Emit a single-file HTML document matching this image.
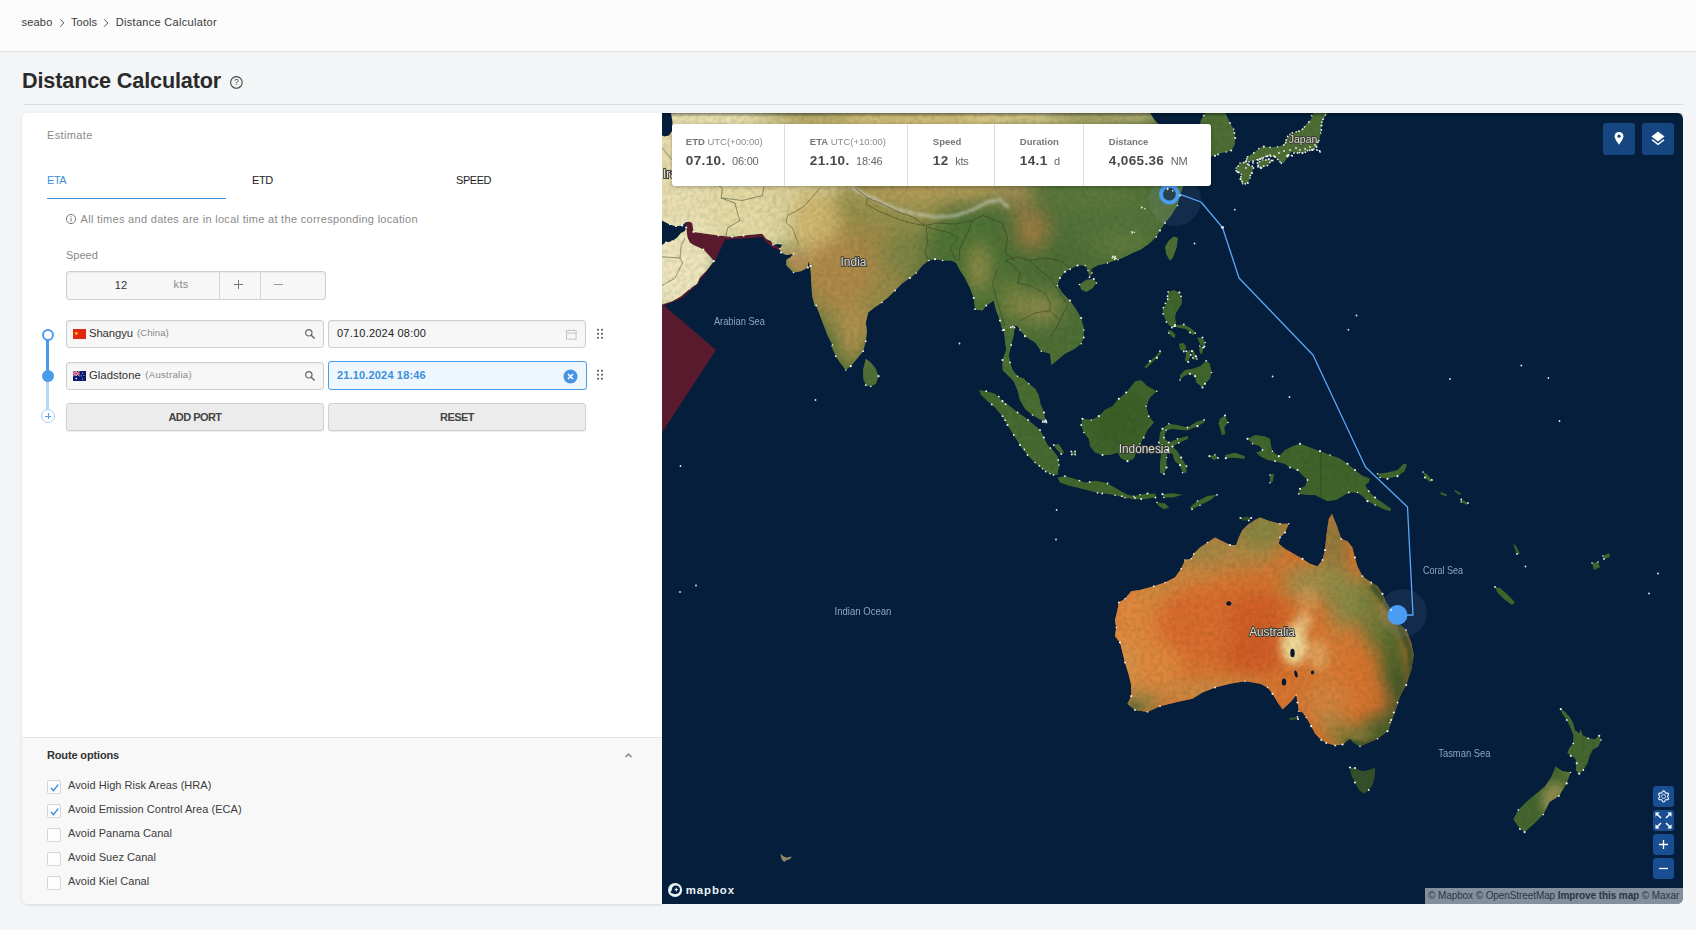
<!DOCTYPE html>
<html lang="en">
<head>
<meta charset="utf-8">
<title>Distance Calculator</title>
<style>
*{box-sizing:border-box;margin:0;padding:0}
html,body{width:1696px;height:930px;overflow:hidden}
body{background:#f3f5f7;font-family:"Liberation Sans",sans-serif;color:#333;position:relative;font-size:11px}
.abs{position:absolute}
#topbar{left:0;top:0;width:1696px;height:52px;background:#fcfcfc;border-bottom:1px solid #e1e3e5}
#crumbs{left:22px;top:15px;font-size:11px;color:#3a3a3a;white-space:nowrap;line-height:14px}
#crumbs span.s{display:inline-block;width:18px;text-align:center;color:#555}
#title{left:22px;top:66.2px;font-size:21.6px;font-weight:bold;color:#2a2a2a;letter-spacing:-.13px;white-space:nowrap;line-height:30px}
#hr{left:24px;top:104px;width:1659px;height:1px;background:#d9dbde}
#card{left:22px;top:113px;width:640px;height:791px;background:#fff;border-radius:6px 0 0 6px;box-shadow:0 1px 3px rgba(0,0,0,.12)}
.lbl{color:#8a8a8a;font-size:11px;white-space:nowrap;line-height:14px}
.tab{font-size:11px;color:#222;white-space:nowrap;line-height:14px;letter-spacing:-.45px}
.inp{height:28.4px;border:1px solid #cfcfcf;border-radius:3px;background:#f7f7f7;box-shadow:inset 0 1px 2px rgba(0,0,0,.06)}
.btn{height:28.4px;border:1px solid #d0d0d0;border-radius:3px;background:#ececec;text-align:center;font-size:11px;letter-spacing:-.55px;font-weight:bold;color:#444;line-height:27px;box-shadow:0 1px 1px rgba(0,0,0,.08)}
.t{white-space:nowrap;line-height:14px}
#ropt{left:22px;top:737px;width:640px;height:167px;background:#f8f8f8;border-top:1px solid #e2e2e2;border-radius:0 0 0 6px}
.cb{width:14px;height:14px;border:1px solid #d6d6d6;border-radius:2px;background:#fdfdfd;left:47px}
.cbl{left:68.1px;letter-spacing:.04px;font-size:11px;color:#3c3c3c;white-space:nowrap;line-height:14px}
#map{left:662px;top:113px;width:1021px;height:791px;background:#041e3c;border-radius:0 6px 6px 0;overflow:hidden}
#info{left:672px;top:124px;width:539px;height:62px;background:#fff;border-radius:3px;box-shadow:0 1px 4px rgba(0,0,0,.3)}
#info .d{position:absolute;top:0;width:1px;height:62px;background:#dedede}
#info .h{position:absolute;top:12px;font-size:9.5px;color:#8c8c8c;white-space:nowrap;line-height:12px}
#info .h b{color:#777}
#info .v{position:absolute;top:28px;font-size:11px;color:#555;white-space:nowrap;line-height:18px}
#info .v i{font-style:normal;margin-left:6.6px;letter-spacing:-.25px;color:#666}
#info .v b{font-size:13.5px;color:#484848;letter-spacing:.36px}
.mb{background:#15467f;border-radius:3px}
.mb2{background:#1a4e92}
</style>
</head>
<body>
<div id="topbar" class="abs"></div>
<div class="abs t" style="left:21.6px;top:15px;font-size:11px;color:#3a3a3a;letter-spacing:.18px">seabo</div>
<svg class="abs" style="left:59px;top:17.5px" width="6" height="10" viewBox="0 0 6 10"><path d="M1.2 1.3 L4.8 5 L1.2 8.7" fill="none" stroke="#555" stroke-width="1"/></svg>
<div class="abs t" style="left:71px;top:15px;font-size:11px;color:#3a3a3a;letter-spacing:.06px">Tools</div>
<svg class="abs" style="left:103px;top:17.5px" width="6" height="10" viewBox="0 0 6 10"><path d="M1.2 1.3 L4.8 5 L1.2 8.7" fill="none" stroke="#555" stroke-width="1"/></svg>
<div class="abs t" style="left:115.8px;top:15px;font-size:11px;color:#3a3a3a;letter-spacing:.3px">Distance Calculator</div>
<div id="title" class="abs">Distance Calculator</div>
<svg class="abs" style="left:229px;top:75px" width="14" height="14" viewBox="0 0 14 14"><circle cx="7.4" cy="7.4" r="5.8" fill="none" stroke="#444" stroke-width="1.1"/><text x="7.4" y="10.4" font-size="8.4" text-anchor="middle" fill="#444" font-family="Liberation Sans, sans-serif">?</text></svg>
<div id="hr" class="abs"></div>

<div id="card" class="abs"></div>
<div class="abs lbl" style="left:47px;top:128px;letter-spacing:.36px">Estimate</div>
<div class="abs tab" style="left:47px;top:173px;color:#3d8fdc">ETA</div>
<div class="abs" style="left:47px;top:198px;width:179px;height:1px;background:#3d8fdc"></div>
<div class="abs tab" style="left:252px;top:173px">ETD</div>
<div class="abs tab" style="left:456px;top:173px">SPEED</div>
<svg class="abs" style="left:65px;top:213px" width="12" height="12" viewBox="0 0 12 12"><circle cx="6" cy="6" r="4.6" fill="none" stroke="#777" stroke-width="1"/><rect x="5.5" y="5.2" width="1" height="3.4" fill="#777"/><rect x="5.5" y="3.2" width="1" height="1.1" fill="#777"/></svg>
<div class="abs lbl" style="left:80.5px;top:212px;font-size:11px;letter-spacing:.3px">All times and dates are in local time at the corresponding location</div>
<div class="abs lbl" style="left:66px;top:248px">Speed</div>
<div class="abs inp" style="left:66px;top:271px;width:259.5px;height:28.8px"></div>
<div class="abs" style="left:219px;top:272px;width:1px;height:27px;background:#d4d4d4"></div>
<div class="abs" style="left:259.5px;top:272px;width:1px;height:27px;background:#d4d4d4"></div>
<div class="abs t" style="left:114.8px;top:278.3px;color:#333">12</div>
<div class="abs t" style="left:173.5px;top:277.3px;color:#888;letter-spacing:.4px">kts</div>
<div class="abs" style="left:234px;top:284px;width:9px;height:1px;background:#777"></div>
<div class="abs" style="left:238px;top:280px;width:1px;height:9px;background:#777"></div>
<div class="abs" style="left:274px;top:284px;width:9px;height:1px;background:#999"></div>

<!-- timeline -->
<div class="abs" style="left:46px;top:335px;width:3px;height:41px;background:#4a9bea"></div>
<div class="abs" style="left:46px;top:376px;width:3px;height:34px;background:#b9d8f7"></div>
<div class="abs" style="left:42px;top:329px;width:12px;height:12px;border-radius:50%;border:2px solid #4a9bea;background:#fff"></div>
<div class="abs" style="left:42px;top:370px;width:12px;height:12px;border-radius:50%;background:#4a9bea"></div>
<div class="abs" style="left:41px;top:409px;width:14px;height:14px;border-radius:50%;border:1px solid #a9cff5;background:#fff"></div>
<div class="abs" style="left:45px;top:415.5px;width:6px;height:1px;background:#4a9bea"></div>
<div class="abs" style="left:47.5px;top:413px;width:1px;height:6px;background:#4a9bea"></div>

<!-- row 1 -->
<div class="abs inp" style="left:66px;top:320px;width:258px"></div>
<svg class="abs" style="left:73px;top:329px" width="13" height="10" viewBox="0 0 13 10"><rect width="13" height="10" fill="#de2910"/><text x="1" y="5.5" font-size="5" fill="#ffde00" font-family="DejaVu Sans, sans-serif">&#9733;</text></svg>
<div class="abs t" style="left:89px;top:326px;font-size:11.3px;color:#333;letter-spacing:-.1px">Shangyu</div><div class="abs t" style="left:137px;top:325.5px;font-size:9.6px;color:#888;letter-spacing:.05px">(China)</div>
<svg class="abs" style="left:304px;top:328px" width="12" height="12" viewBox="0 0 12 12"><circle cx="4.8" cy="4.8" r="3.2" fill="none" stroke="#666" stroke-width="1.2"/><path d="M7.2 7.2 L10.6 10.6" stroke="#666" stroke-width="1.4"/></svg>
<div class="abs inp" style="left:328px;top:320px;width:258px"></div>
<div class="abs t" style="left:337px;top:326px;font-size:11px;color:#222;letter-spacing:.22px">07.10.2024 08:00</div>
<svg class="abs" style="left:566px;top:329px" width="11" height="11" viewBox="0 0 11 11"><rect x="0.5" y="1.5" width="9.6" height="8.6" fill="none" stroke="#c4c4c4" stroke-width="1"/><path d="M0.5 4 H10" stroke="#c4c4c4"/><path d="M3 0.3 V2 M7.6 0.3 V2" stroke="#c4c4c4"/></svg>
<!-- row 2 -->
<div class="abs inp" style="left:66px;top:361.6px;width:258px"></div>
<svg class="abs" style="left:73px;top:371px" width="13" height="10" viewBox="0 0 13 10"><rect width="13" height="10" fill="#0a1a6e"/><rect width="6.5" height="5" fill="#1c2a80"/><path d="M0 0 L6.5 5 M6.5 0 L0 5" stroke="#fff" stroke-width="1"/><path d="M3.25 0 V5 M0 2.5 H6.5" stroke="#fff" stroke-width="1.4"/><path d="M3.25 0 V5 M0 2.5 H6.5 M0 0 L6.5 5 M6.5 0 L0 5" stroke="#d8203a" stroke-width=".6"/><circle cx="3.2" cy="7.6" r=".8" fill="#fff"/><circle cx="9.6" cy="2" r=".5" fill="#fff"/><circle cx="11" cy="4.2" r=".5" fill="#fff"/><circle cx="9.6" cy="8" r=".5" fill="#fff"/><circle cx="8.2" cy="4.8" r=".5" fill="#fff"/></svg>
<div class="abs t" style="left:89px;top:368px;font-size:11.3px;color:#333;letter-spacing:.03px">Gladstone</div><div class="abs t" style="left:145.3px;top:367.5px;font-size:9.6px;color:#888;letter-spacing:.26px">(Australia)</div>
<svg class="abs" style="left:304px;top:370px" width="12" height="12" viewBox="0 0 12 12"><circle cx="4.8" cy="4.8" r="3.2" fill="none" stroke="#666" stroke-width="1.2"/><path d="M7.2 7.2 L10.6 10.6" stroke="#666" stroke-width="1.4"/></svg>
<div class="abs" style="left:328px;top:361px;width:259px;height:29px;border:1px solid #4a9bea;border-radius:3px;background:#eef6fe"></div>
<div class="abs t" style="left:337px;top:368px;font-size:11px;color:#3d8fdc;font-weight:bold;letter-spacing:.16px">21.10.2024 18:46</div>
<svg class="abs" style="left:563.4px;top:368.5px" width="15" height="15" viewBox="0 0 15 15"><circle cx="7.5" cy="7.5" r="7" fill="#4a93e4"/><path d="M5 5 L10 10 M10 5 L5 10" stroke="#fff" stroke-width="1.5"/></svg>
<!-- drag handles -->
<svg class="abs" style="left:596px;top:328px" width="8" height="12" viewBox="0 0 8 12"><g fill="#555"><circle cx="2" cy="1.8" r="1"/><circle cx="6" cy="1.8" r="1"/><circle cx="2" cy="5.8" r="1"/><circle cx="6" cy="5.8" r="1"/><circle cx="2" cy="9.8" r="1"/><circle cx="6" cy="9.8" r="1"/></g></svg>
<svg class="abs" style="left:596px;top:369px" width="8" height="12" viewBox="0 0 8 12"><g fill="#555"><circle cx="2" cy="1.8" r="1"/><circle cx="6" cy="1.8" r="1"/><circle cx="2" cy="5.8" r="1"/><circle cx="6" cy="5.8" r="1"/><circle cx="2" cy="9.8" r="1"/><circle cx="6" cy="9.8" r="1"/></g></svg>
<!-- buttons -->
<div class="abs btn" style="left:66px;top:403px;width:258px">ADD PORT</div>
<div class="abs btn" style="left:328px;top:403px;width:258px">RESET</div>

<!-- route options -->
<div id="ropt" class="abs"></div>
<div class="abs t" style="left:47px;top:748px;font-weight:bold;font-size:11px;color:#333;letter-spacing:-.15px">Route options</div>
<svg class="abs" style="left:624px;top:752px" width="9" height="7" viewBox="0 0 9 7"><path d="M1.5 5 L4.5 2 L7.5 5" fill="none" stroke="#777" stroke-width="1.2"/></svg>
<div class="abs cb" style="top:780px"></div>
<svg class="abs" style="left:49px;top:782px" width="11" height="11" viewBox="0 0 11 11"><path d="M2 6 L4.4 8.6 L9.2 2.6" fill="none" stroke="#3d8fdc" stroke-width="1.5"/></svg>
<div class="abs cbl" style="top:778px">Avoid High Risk Areas (HRA)</div>
<div class="abs cb" style="top:804px"></div>
<svg class="abs" style="left:49px;top:806px" width="11" height="11" viewBox="0 0 11 11"><path d="M2 6 L4.4 8.6 L9.2 2.6" fill="none" stroke="#3d8fdc" stroke-width="1.5"/></svg>
<div class="abs cbl" style="top:802px">Avoid Emission Control Area (ECA)</div>
<div class="abs cb" style="top:828px"></div>
<div class="abs cbl" style="top:826px">Avoid Panama Canal</div>
<div class="abs cb" style="top:852px"></div>
<div class="abs cbl" style="top:850px">Avoid Suez Canal</div>
<div class="abs cb" style="top:876px"></div>
<div class="abs cbl" style="top:874px">Avoid Kiel Canal</div>

<!-- MAP -->
<div id="map" class="abs">
<svg id="mapsvg" width="1021" height="791" viewBox="662 113 1021 791" style="position:absolute;left:0;top:0">
<!--LAND-->
<defs>
<filter id="b10" x="-30%" y="-30%" width="160%" height="160%"><feGaussianBlur stdDeviation="9"/></filter>
<filter id="b5" x="-30%" y="-30%" width="160%" height="160%"><feGaussianBlur stdDeviation="4.5"/></filter>
<filter id="b2" x="-30%" y="-30%" width="160%" height="160%"><feGaussianBlur stdDeviation="1.6"/></filter>
<filter id="tx" x="0" y="0" width="100%" height="100%"><feTurbulence type="fractalNoise" baseFrequency="0.22" numOctaves="3" seed="4" result="n"/><feColorMatrix in="n" type="matrix" values="0 0 0 0 0  0 0 0 0 0  0 0 0 0 0  1.6 0 0 0 -0.55" result="a"/><feFlood flood-color="#1b2a10"/><feComposite in2="a" operator="in"/></filter>
<clipPath id="c_asia"><path d="M650 100 L650 220.6 L662 220.6 L669.8 224.4 L676 226.2 L682.2 225.6 L686.6 221.2 L692.2 222.5 L693.5 231.9 L706 233.8 L718.5 235.6 L732.2 236.9 L743.5 235.6 L762.2 233.8 L766 238.8 L771 241.2 L772.9 245 L779.8 243.8 L782.2 245 L779.8 248.8 L781 252.5 L786 255 L793.5 253.8 L790.4 257.5 L786.6 259.4 L786 265 L793.5 272.5 L801 271.2 L807.9 267.5 L807.9 261.2 L810.4 266.2 L811 277.5 L811.6 287.5 L812.2 296.2 L814.8 306 L816.2 305.5 L820 315.5 L823.8 325.5 L827.5 335.5 L832.5 345 L830.8 345 L835.8 356.2 L840.8 363.8 L845.8 370 L850.8 366.2 L857 358.8 L863.2 351.2 L865.8 341.2 L867 331.2 L865.8 322.5 L868.2 312.5 L874.5 307.5 L882 302.5 L884.5 300 L887.5 298 L895 290.5 L902.5 283 L910 278 L916.2 273 L922.5 265.5 L928.8 260.5 L935 259.2 L942.5 260.5 L951.2 260.5 L956.2 263 L960 270.5 L965 278 L970 288 L973.8 298 L975 308 L975 309.2 L982.5 310.5 L986.2 305.5 L993.8 300.5 L996.2 310.5 L1000 320.5 L1002.5 330.5 L1003.8 330 L1003.8 330 L1005 340 L1006.2 350 L1002.5 360 L1002.5 370 L1007.5 375 L1013.8 381.2 L1017.5 390 L1020 400 L1025 408.8 L1032.5 415 L1040 419.5 L1045.5 420.5 L1044 412.5 L1040 402.5 L1038.8 395 L1035 388.8 L1028.8 383.8 L1023.8 378.8 L1017.5 376.2 L1012.5 370 L1010 362.5 L1008.8 355 L1011.2 345 L1013.8 335 L1014.5 327.5 L1012.5 325 L1017.5 326.2 L1020 330 L1025 336.2 L1035 342.5 L1041.2 351.2 L1050 353.8 L1051.2 365 L1056.2 361.2 L1065 353.8 L1075 348.8 L1081.2 343.8 L1083.8 337.5 L1083.8 330 L1083.8 328 L1081.2 318 L1076.2 309.2 L1070 300.5 L1062.5 293 L1057.5 285.5 L1060 278 L1065 271.8 L1070 269.2 L1077.5 265.5 L1085 265.5 L1088 270.5 L1089.5 277.2 L1092 273 L1091.2 269.2 L1097.5 265.5 L1107.5 263 L1115 260.5 L1122.5 258 L1132.5 253 L1141.2 249.2 L1150 243 L1156.2 236.8 L1160 230.5 L1165 223 L1171.2 215.5 L1177.5 205.5 L1180 195.5 L1183 186.8 L1172.5 170.5 L1165 158 L1162.5 143 L1160 125.5 L1155 120.5 L1150 113 L1150 103Z M653.5 245 L662 245 L666 242.6 L672.2 241.2 L677.2 237.5 L681 233.1 L685 231 L686.2 227.5 L687.5 237.5 L689.8 242.5 L693.5 245 L703.5 249.4 L711 257.5 L713.8 261.2 L706 271.2 L699.8 277.5 L697.2 283.8 L689.8 288.8 L681 296.2 L672.2 301.2 L662 304.4 L653.5 305Z M865.8 358.8 L870.8 362.5 L876 368.8 L878.5 376.2 L876 383.8 L870.8 386.5 L865.8 385.2 L863.2 378.8 L863 370 L864.5 363.8Z M1079.5 284.5 L1086.2 279.8 L1093.8 279 L1096.5 283 L1092.5 288.2 L1086.2 292 L1081.2 289.5Z M1168.8 240.5 L1173.8 236.5 L1178 238 L1176.5 248 L1172.8 258 L1170 260.8 L1166.2 254.2 L1165 246.8Z M1203.8 115.5 L1206.2 111.8 L1225 111.8 L1230 123 L1233.8 129.2 L1235.2 138 L1234.5 145.5 L1231.2 150.5 L1226.2 152 L1220 153.2 L1215 155.8 L1210 156.1 L1205 150.5 L1203.1 138 L1200 128 L1200.6 120.5Z M1236.2 168 L1240 163 L1246.2 161.5 L1250 165.5 L1253.4 168 L1252 173 L1250 178 L1247.8 183 L1242.5 183.8 L1240.5 179.2 L1241.2 174.2 L1237.5 171.8Z M1246.2 161.1 L1247.5 156.8 L1253.8 153 L1258.8 148.6 L1263.8 146.6 L1270 147.4 L1277.5 146.8 L1283.8 144.9 L1286.2 139.9 L1290 134.2 L1296.2 131.8 L1302.5 129.2 L1306.2 124.2 L1311.2 119.2 L1313.8 111.8 L1328.8 111.8 L1323.1 119.2 L1321.5 125.5 L1320.8 133 L1319 140.5 L1316.5 146.8 L1312.5 150 L1307.5 150.6 L1302.5 153.1 L1297.5 153.1 L1291.2 151.9 L1287.5 156.8 L1283.8 163.1 L1280 161.9 L1275 156.9 L1267.5 156.2 L1260 159.2 L1253.1 161.2Z M1257.5 163 L1262.5 159.9 L1268.8 159.1 L1272.8 160.5 L1267.5 165.6 L1261.2 168.1 L1258 166.8Z"/></clipPath>
<clipPath id="c_sea"><path d="M1247.5 438.8 L1255 435 L1265 436.2 L1270 438.8 L1271.2 446.2 L1272.5 451.2 L1278.8 456.2 L1285 450 L1292.5 446.2 L1300 443.8 L1310 447.5 L1320 451.2 L1330 455 L1340 458.8 L1347.5 463.8 L1355 470 L1361.2 475 L1370 478.8 L1368.8 482.5 L1365 485 L1368.8 491.2 L1375 497.5 L1382.5 502.5 L1391.2 508.8 L1390 511.2 L1382.5 508.8 L1375 505 L1367.5 501.2 L1362.5 496.2 L1357.5 492.5 L1348.8 492.5 L1342.5 496.2 L1336.2 500 L1327.5 501.2 L1320 497.5 L1315 495 L1307.5 495 L1298.8 493.8 L1300 488.8 L1305 486.2 L1307.5 480 L1302.5 475 L1297.5 470 L1290 467.5 L1285 463.8 L1280 462.5 L1275 461.2 L1267.5 460 L1260 456.2 L1256.2 452.5 L1262.5 450 L1260 446.2 L1252.5 443.8Z M1377.5 473.8 L1387.5 472.5 L1397.5 470 L1403.8 463.8 L1407 464.5 L1404.5 471.2 L1397.5 476.2 L1387.5 478.8 L1380 477.5Z M1423 472 L1427.5 474.5 L1431.8 480 L1430 482.5 L1425 477.5Z M1440.5 492 L1447 494.5 L1446.2 496.5 L1440.5 494Z M1461.2 499.5 L1468 503 L1467 505 L1461.2 502Z M1455 490 L1461.2 493.8 L1460 495 L1454.5 491.5Z M1220 418.8 L1225 415.5 L1228 422.5 L1224.2 427.5 L1225.5 433.8 L1221.8 435.5 L1220 428 L1218.5 423.8Z M1225 455 L1235 452.8 L1244.5 456 L1244.5 459 L1235 457.8 L1225.8 458.2Z M1209.5 456.2 L1215 454.8 L1218 458 L1213.8 460.2Z M1270 475 L1274 473.5 L1273 481.2 L1270 482.8Z M1189.5 507.5 L1197.5 501 L1207.5 496 L1217 494.8 L1210.5 500 L1200 505.2 L1192 509.2Z M1157 502.5 L1165 503.5 L1169.2 507.5 L1163.8 509.2 L1158.2 505.5Z M1100 482 L1107.5 483.5 L1115 490.8 L1125 494.5 L1135 496 L1145 494.5 L1155.5 493.5 L1155.5 497.5 L1145 499 L1135 499.2 L1125 497.8 L1115 495.2 L1105 492.8 L1100 490Z M1162.5 494.2 L1172.5 493.2 L1183 494.8 L1172.5 497.5 L1163.8 497.5Z M1180 375 L1185 370 L1192.5 368.8 L1200 366.2 L1206.2 360.8 L1210 363.8 L1211.5 372.5 L1210 378.8 L1205 383.8 L1202.5 387.5 L1196.2 382.5 L1195 376.2 L1190 373.8 L1183.8 376.2 L1180 380Z M978.8 390 L986.2 391.2 L995 393.8 L1002.5 401.2 L1010 406.2 L1017.5 412.5 L1025 417.5 L1032.5 423.8 L1040 430 L1043.8 437.5 L1047.5 445 L1052.5 450 L1057.5 456.2 L1059 465 L1057.5 475 L1050 473.8 L1042.5 468.8 L1035 462.5 L1027.5 455 L1020 445 L1013.8 435 L1007.5 425 L1002.5 416.2 L995 407.5 L987.5 401.2 L981.2 395Z M1135 381.2 L1141.2 380 L1147.5 386.2 L1156.8 391.2 L1150 397.5 L1146.2 406.2 L1148.8 416.2 L1154 422.5 L1147.5 430 L1143.8 437.5 L1140 443.8 L1136.2 452.5 L1133.8 458.8 L1127.5 461.2 L1121.2 458.8 L1117.5 452.5 L1110 455 L1102.5 455 L1095 452.5 L1090 446.2 L1088.8 438.8 L1083.8 432.5 L1081.2 425 L1082.5 418.8 L1091.2 420 L1098.8 416.2 L1105 410 L1112.5 406.2 L1118.8 398.8 L1126.2 392.5 L1131.2 386.2Z M1057.5 477.5 L1065 476.2 L1075 478.8 L1085 482.5 L1095 480.8 L1105 482.5 L1112.5 486.2 L1121.2 491.2 L1128 495 L1125 497.5 L1117.5 495.5 L1107.5 494 L1097.5 492.8 L1087.5 490.2 L1077.5 487.8 L1067.5 485.2 L1060 482.5Z M1133.8 496.2 L1140 494.8 L1147.5 493.5 L1155.5 494.2 L1150 498 L1141.2 499 L1135 498Z M1053.8 445 L1058.8 444.2 L1064 452.5 L1061.2 454 L1056.2 448.8Z M1071.2 451.5 L1075.2 451.5 L1075.2 454.5 L1071.8 454.5Z M1144.4 366.9 L1150 361.2 L1155.6 356.2 L1160 351.2 L1161.5 352.5 L1156.9 357.8 L1151.2 363.4 L1145.8 368.4Z M1162.5 428.8 L1168.8 423.8 L1177.5 425 L1187.5 427.5 L1197.5 421.2 L1204.2 419.8 L1204.2 422.5 L1197.5 426.2 L1187.5 430.5 L1172.5 429 L1166.2 430.2 L1164 437.5 L1168.8 442.5 L1177.5 438.8 L1188 436 L1188 439 L1178.8 442.8 L1172.5 446.5 L1177.5 451.2 L1181.2 457.5 L1186.5 466.2 L1186.5 472.8 L1182.5 472.8 L1180 465.2 L1175 461.5 L1172.5 454 L1167.5 450.2 L1166.5 457.5 L1166.5 467.5 L1164 474 L1160 472.8 L1160 462.5 L1161.2 452.5 L1158.8 442.5 L1160 432.5Z M1168.1 291.9 L1173.8 290 L1179.4 292.5 L1181.9 298.8 L1181.9 303.8 L1178.8 308.8 L1176.2 312.5 L1175 317.5 L1176.2 322.5 L1175 326.2 L1171.9 327.5 L1168.8 325 L1165.6 320 L1163.1 313.8 L1162.5 308.8 L1165 306.2 L1166.9 301.2 L1167.5 296.2Z M1175 325 L1178.1 325 L1183.8 324.4 L1188.8 326.9 L1193.1 330 L1195.2 333.1 L1193.1 335.2 L1190 332.5 L1186.2 329 L1181.2 328.2 L1176.2 327.2Z M1168.1 330 L1172.5 331.2 L1175.6 335 L1174.4 338.1 L1171.2 336.2 L1168.8 333.1Z M1196.9 337.5 L1202.5 337.5 L1205.2 342.5 L1204.5 346.5 L1200.6 345 L1198.8 341.2Z M1199.8 346 L1203.2 347.5 L1202.6 353.8 L1200 353.4 L1199.2 349.4Z M1178.8 343.8 L1183.8 343 L1186.5 347.5 L1183.8 351.5 L1180 349.5Z M1186.2 351.2 L1190 350 L1190.8 355 L1188.2 362 L1185 360.8 L1185.6 356.2Z M1191.9 351.2 L1193.8 350 L1195.8 356.2 L1193.2 360.2 L1192.5 355.8Z M1192.8 357.8 L1196.2 356.5 L1197 359 L1193.8 359.8Z M1495 587 L1500 588 L1508 595 L1515 602 L1512 605 L1504 599 L1497 592Z M1592 563 L1598 562 L1600 567 L1594 570Z M1603 556 L1609 553 L1610 557 L1604 559Z M1513 544 L1516 546 L1520 554 L1517 554Z"/></clipPath>
<clipPath id="c_aus"><path d="M1332 513.8 L1337.5 527.5 L1341.2 538.8 L1347.5 541.2 L1352.5 547.5 L1355 557.5 L1357.5 566.2 L1362.5 576.2 L1371.2 582.5 L1377.5 586.2 L1382.5 593.8 L1386.2 602.5 L1391.2 610 L1400 625 L1406.2 630 L1411.2 642.5 L1413.8 655 L1411.2 670 L1406.2 685 L1401.2 693.8 L1397.5 702.5 L1393.8 712.5 L1390 722.5 L1387.5 732 L1398.8 701.2 L1395 707.5 L1391.2 720 L1387.5 731.2 L1377.5 738.8 L1368.8 742.5 L1360 746.2 L1353.8 742.5 L1350 738.8 L1342.5 744.5 L1335 745.5 L1326.2 743 L1321.2 740 L1315 733.8 L1311.2 726.2 L1306.2 717.5 L1302.5 712.5 L1298.8 711.2 L1297.5 702.5 L1296.2 695 L1292.5 700 L1287.5 705 L1282.5 709.5 L1277.5 702.5 L1272.5 693.8 L1267.5 687.5 L1260 683.8 L1245 681.2 L1230 683.8 L1215 687.5 L1202.5 692.5 L1192.5 698.8 L1177.5 702 L1160 706.2 L1147.5 712 L1135 710 L1127.5 703.8 L1131.2 696.2 L1131.2 685 L1128.8 675 L1125 662.5 L1122.5 652.5 L1120 642.5 L1115 636.2 L1116.2 627.5 L1115 620 L1117.5 610 L1118.8 602.5 L1125 598.8 L1131.2 591.2 L1140 590 L1153.8 586.2 L1165 582.5 L1175 577.5 L1181.2 568.8 L1185 560 L1191.2 558.8 L1193.8 553.8 L1200 547.5 L1207.5 542.5 L1215 537.5 L1222.5 541.2 L1230 545 L1236.2 545 L1238.8 537.5 L1242.5 530 L1247.5 525 L1255 520 L1260 517.5 L1270 521.2 L1280 523.8 L1288.8 523.8 L1285 532.5 L1280 537.5 L1278.8 543.8 L1285 548.8 L1293.8 553.8 L1302.5 558.8 L1310 563.8 L1317.5 566.2 L1322.5 560 L1325 550 L1326.2 537.5 L1327.5 527.5 L1328.8 518.8Z"/></clipPath>
<clipPath id="c_ausisl"><path d="M1350 767.5 L1355 768 L1362.5 771.2 L1368.8 770 L1375 767.5 L1375 776.2 L1372.5 785 L1368.8 790 L1363.8 793.8 L1358.8 790 L1355 782.5 L1351.2 775Z M1288.8 718 L1297.5 716.8 L1298 719 L1290 720.5Z M1240.5 518 L1247.5 516.5 L1251.2 518 L1248.8 520.5 L1242 520.5Z"/></clipPath>
<clipPath id="c_nz"><path d="M1560.8 709.2 L1565 711.7 L1570 717.5 L1573.3 723.3 L1575 730 L1579.2 733.3 L1580.8 729.2 L1582.5 735 L1588.3 738.3 L1595 739.2 L1599.2 735.8 L1601 740 L1598.3 746.7 L1593.3 749.2 L1590 755 L1587.5 763.3 L1583.3 770 L1579.2 773.7 L1575.8 770 L1576.7 763.3 L1575 758.3 L1570.8 755.8 L1567.3 753.3 L1569.2 748.3 L1573.3 743.3 L1573.3 735 L1570 726.7 L1566.7 720 L1562.5 714.2Z M1555.7 766.3 L1562 771 L1570.4 772.5 L1566.7 783.4 L1558.9 795.9 L1549.5 802.1 L1543.3 814.6 L1533.9 824 L1524.6 832.1 L1519.9 829 L1513.3 819.3 L1518.3 809.9 L1526.1 802.1 L1535.5 794.3 L1544.8 786.6 L1551.1 777.2Z"/></clipPath>
</defs>
<polygon points="685.5,214 694,214 726,230 726,238 715,260.5 706,272.5 698.5,282.5 691,290 682,298.5 664,305.5 716,350 662,432.5 650,450 650,290 680,262 686,240 685.5,226" fill="#591a2d"/>
<polyline points="726,238 745,237 763,235.5 768,242 774,246.5 782,250" fill="none" stroke="#591a2d" stroke-width="3"/>
<g clip-path="url(#c_asia)">
<rect x="650" y="100" width="1050" height="820" fill="#4e6f36"/>
<g filter="url(#b10)"><ellipse cx="855" cy="262" rx="58" ry="80" fill="#a08a4a"/><ellipse cx="880" cy="205" rx="70" ry="22" fill="#94904d" transform="rotate(14 880 205)"/><ellipse cx="700" cy="160" rx="80" ry="90" fill="#e9dfb0"/><ellipse cx="760" cy="200" rx="55" ry="55" fill="#e6dba6"/><ellipse cx="680" cy="270" rx="40" ry="50" fill="#efe6bf"/><ellipse cx="800" cy="150" rx="60" ry="50" fill="#ddd098"/><ellipse cx="790" cy="215" rx="22" ry="30" fill="#dcd39c"/><ellipse cx="900" cy="118" rx="120" ry="30" fill="#cdba76"/><ellipse cx="1060" cy="110" rx="100" ry="22" fill="#d8c98a"/><ellipse cx="935" cy="188" rx="90" ry="16" fill="#b59d5a"/><ellipse cx="815" cy="114" rx="42" ry="9" fill="#a9a162"/><ellipse cx="1092" cy="114" rx="48" ry="9" fill="#8f9054"/><ellipse cx="1012" cy="190" rx="25" ry="14" fill="#a8955a"/><ellipse cx="815" cy="225" rx="24" ry="36" fill="#d0b870"/><ellipse cx="800" cy="262" rx="14" ry="10" fill="#b89558"/><ellipse cx="838" cy="272" rx="32" ry="34" fill="#b08a48"/><ellipse cx="850" cy="335" rx="16" ry="30" fill="#b3934e"/><ellipse cx="834" cy="330" rx="5" ry="34" fill="#7b8444" transform="rotate(-18 834 330)"/><ellipse cx="905" cy="255" rx="22" ry="26" fill="#7f8545"/><ellipse cx="880" cy="300" rx="12" ry="20" fill="#948a49"/><ellipse cx="962" cy="238" rx="36" ry="26" fill="#4f7335"/><ellipse cx="990" cy="300" rx="30" ry="60" fill="#4d7234"/><ellipse cx="1022" cy="390" rx="22" ry="50" fill="#486d31"/><ellipse cx="1032" cy="230" rx="17" ry="20" fill="#9e7d44"/><ellipse cx="1020" cy="205" rx="14" ry="10" fill="#8e7c46"/><ellipse cx="979" cy="268" rx="6" ry="24" fill="#ab9c54"/><ellipse cx="1040" cy="308" rx="22" ry="16" fill="#8a8a48"/><ellipse cx="1012" cy="300" rx="10" ry="18" fill="#7f8645"/><ellipse cx="1110" cy="215" rx="55" ry="35" fill="#52733a"/><ellipse cx="1085" cy="196" rx="60" ry="12" fill="#5d7a3c"/><ellipse cx="1120" cy="245" rx="30" ry="12" fill="#607c3e"/></g>
<g filter="url(#b5)"><ellipse cx="797" cy="262" rx="10" ry="8" fill="#b8935a"/><ellipse cx="790" cy="252" rx="6" ry="4" fill="#c9a970"/></g>
<g filter="url(#b2)"><polyline points="851,187 866,195 885,204 900,210 915,214 935,217 955,216 972,210 988,202 1000,200 1008,207" fill="none" stroke="#e0e1da" stroke-width="3" stroke-linecap="round" stroke-linejoin="round" stroke-dasharray="7 2 3 1.5 9 2" opacity=".6"/></g>
<rect x="650" y="100" width="1050" height="820" filter="url(#tx)" opacity=".15"/>
</g>
<g clip-path="url(#c_sea)">
<rect x="650" y="100" width="1050" height="820" fill="#41662d"/>
<g filter="url(#b10)"><ellipse cx="1120" cy="420" rx="30" ry="30" fill="#3b5f27"/><ellipse cx="1320" cy="470" rx="40" ry="20" fill="#3f6429"/><ellipse cx="1030" cy="440" rx="30" ry="50" fill="#466b30" transform="rotate(-40 1030 440)"/></g>
<rect x="650" y="100" width="1050" height="820" filter="url(#tx)" opacity=".15"/>
</g>
<g clip-path="url(#c_aus)">
<rect x="650" y="100" width="1050" height="820" fill="#d8742f"/>
<g filter="url(#b10)"><ellipse cx="1143" cy="640" rx="42" ry="62" fill="#e0883c"/><ellipse cx="1180" cy="588" rx="42" ry="20" fill="#d08a40"/><ellipse cx="1205" cy="622" rx="50" ry="38" fill="#da6c2d"/><ellipse cx="1258" cy="618" rx="30" ry="26" fill="#d25e28"/><ellipse cx="1252" cy="656" rx="30" ry="18" fill="#d25c27"/><ellipse cx="1330" cy="650" rx="22" ry="32" fill="#d87a35"/><ellipse cx="1325" cy="700" rx="26" ry="20" fill="#d4823c"/><ellipse cx="1225" cy="552" rx="58" ry="18" fill="#b58845"/><ellipse cx="1262" cy="530" rx="30" ry="20" fill="#878643"/><ellipse cx="1200" cy="548" rx="22" ry="16" fill="#a08845"/><ellipse cx="1334" cy="545" rx="14" ry="36" fill="#8d7a3c"/><ellipse cx="1312" cy="582" rx="30" ry="18" fill="#a08e4a"/><ellipse cx="1345" cy="600" rx="18" ry="30" fill="#8d8a46"/><ellipse cx="1372" cy="610" rx="12" ry="40" fill="#6f7c3a"/><ellipse cx="1393" cy="655" rx="13" ry="40" fill="#4a672c"/><ellipse cx="1402" cy="700" rx="12" ry="42" fill="#36542a"/><ellipse cx="1385" cy="732" rx="24" ry="18" fill="#425f2b"/><ellipse cx="1352" cy="738" rx="22" ry="12" fill="#6f7a38"/><ellipse cx="1330" cy="722" rx="12" ry="8" fill="#a08c46"/><ellipse cx="1142" cy="703" rx="20" ry="13" fill="#8f8342"/><ellipse cx="1126" cy="665" rx="6" ry="26" fill="#d39a50"/><ellipse cx="1215" cy="692" rx="55" ry="10" fill="#c9904a"/></g>
<g filter="url(#b5)"><ellipse cx="1294" cy="645" rx="13" ry="20" fill="#f1dc9c" opacity="0.95"/><ellipse cx="1303" cy="622" rx="9" ry="9" fill="#e8c486" opacity="0.8"/><ellipse cx="1318" cy="655" rx="10" ry="16" fill="#e6b870" opacity="0.6"/><ellipse cx="1308" cy="600" rx="10" ry="14" fill="#e0a662" opacity="0.5"/><ellipse cx="1390" cy="742" rx="10" ry="6" fill="#3d5a28" opacity="0.8"/><ellipse cx="1134" cy="707" rx="9" ry="6" fill="#5f6a33" opacity="0.9"/></g>
<g filter="url(#b2)"><polyline points="1372,585 1386,603 1400,625 1410,650 1413,680 1408,705 1398,725 1386,740 1365,745 1345,742" fill="none" stroke="#2f4d25" stroke-width="7" stroke-linejoin="round" opacity=".75"/></g>
<rect x="650" y="100" width="1050" height="820" filter="url(#tx)" opacity=".15"/>
</g>
<g clip-path="url(#c_ausisl)">
<rect x="650" y="100" width="1050" height="820" fill="#34502a"/>
<rect x="650" y="100" width="1050" height="820" filter="url(#tx)" opacity=".15"/>
</g>
<g clip-path="url(#c_nz)">
<rect x="650" y="100" width="1050" height="820" fill="#456630"/>
<g filter="url(#b5)"><ellipse cx="1555" cy="800" rx="14" ry="18" fill="#8a8a4e"/><ellipse cx="1570" cy="770" rx="8" ry="8" fill="#6a7a3c"/></g>
<rect x="650" y="100" width="1050" height="820" filter="url(#tx)" opacity=".15"/>
</g>
<polygon points="660,110 670.5,110 672.5,122 672,131 669,135.5 664,136.5 660,134" fill="#041e3c"/>
<polygon points="780.5,853.5 783,856 786,857.5 792,856.5 790,859 786,860.5 784.5,862 782.5,860.5 781,857.5" fill="#8d8763"/>
<g fill="none" stroke="#27331f" stroke-width=".7" opacity=".65" stroke-linejoin="round"><polyline points="722.5,188.0 721.2,198.0 735.0,203.0 737.5,213.0 740.0,220.5 727.5,228.0 726.2,235.5"/><polyline points="721.2,198.0 742.5,200.5 762.5,195.5 763.8,186.8"/><polyline points="820.0,188.0 805.0,205.5 795.0,211.8 787.5,215.5 786.2,223.0 792.5,228.0 796.2,238.0 798.8,244.2"/><polyline points="855.0,188.0 867.5,198.0 866.2,204.2 877.5,210.5 895.0,218.0 910.0,223.0 925.0,225.5"/><polyline points="867.5,198.0 880.0,203.0 897.5,211.8 912.5,216.8 925.0,225.5"/><polyline points="926.2,226.8 927.5,243.0 925.0,253.0 928.8,260.5"/><polyline points="926.2,226.8 940.0,230.5 950.0,233.0 957.5,238.0 950.0,248.0 956.2,260.5"/><polyline points="925.0,225.5 937.5,223.0 955.0,224.2 972.5,220.5 982.5,215.5"/><polyline points="972.5,220.5 967.5,233.0 960.0,248.0 958.8,260.5"/><polyline points="982.5,215.5 1002.5,223.0 1007.5,238.0 1005.0,253.0 1015.0,260.5"/><polyline points="662.0,256.8 680.0,258.0 682.5,263.0 675.0,278.0 662.0,285.5"/><polyline points="685.0,238.0 681.2,245.5 680.0,258.0"/><polyline points="662.0,148.0 675.0,163.0 690.0,170.5 722.5,188.0"/><polyline points="997.5,268.0 992.5,283.0 996.2,298.0 1000.0,310.5 1005.0,325.5"/><polyline points="1005.0,260.5 1010.0,263.0 1020.0,273.0 1017.5,283.0 1030.0,285.5 1045.0,293.0 1050.0,303.0 1050.0,310.5"/><polyline points="1030.0,260.5 1040.0,270.5 1050.0,278.0 1060.0,293.0 1067.5,305.5 1060.0,320.5"/><polyline points="1030.0,260.5 1045.0,258.0 1060.0,260.5 1070.0,268.0"/><polyline points="1020.0,320.5 1035.0,313.0 1050.0,310.5 1060.0,320.5 1055.0,330.5 1050.0,336.8"/><polyline points="1005.0,260.5 1017.5,256.8 1030.0,260.5"/><polyline points="1320.8,451 1320.8,497.5"/></g>
<g fill="#06192f"><ellipse cx="1228.8" cy="603.5" rx="2.6" ry="2.2" fill="#06192f"/><ellipse cx="1292.5" cy="653" rx="2.2" ry="4.2" fill="#06192f"/><ellipse cx="1296" cy="674" rx="1.5" ry="3.6" fill="#06192f" transform="rotate(-15 1296 674)"/><ellipse cx="1284" cy="682" rx="2.2" ry="3.6" fill="#06192f"/><ellipse cx="1312.5" cy="672.5" rx="1.6" ry="2" fill="#06192f"/><ellipse cx="1170" cy="192.5" rx="0" ry="0" fill="#06192f"/></g>
<circle cx="1175" cy="200" r="26" fill="#9db4d4" opacity=".10"/>
<circle cx="1403" cy="613" r="24" fill="#9db4d4" opacity=".10"/>
<polyline points="1180,194.4 1201,202 1222.5,227.5 1239,278 1313,355 1365.5,467 1407.5,507 1413,615 1398,615" fill="none" stroke="#5aa8f8" stroke-width="1.3" stroke-linejoin="round"/>
<circle cx="1222.5" cy="227.5" r="1.4" fill="#dfeaff"/>
<circle cx="1169.4" cy="194.2" r="8.4" fill="#1b3350" fill-opacity=".75" stroke="#4a9df3" stroke-width="4"/>
<circle cx="1397.5" cy="615" r="10" fill="#4a9df3"/>
<text x="853.5" y="265.5" text-anchor="middle" textLength="26" lengthAdjust="spacingAndGlyphs" font-size="12" font-family="Liberation Sans, sans-serif" fill="#d8d8d2" stroke="#3a3a36" stroke-width="1.8" stroke-linejoin="round" paint-order="stroke">India</text>
<text x="1303" y="143" text-anchor="middle" textLength="28.75" lengthAdjust="spacingAndGlyphs" font-size="11.5" font-family="Liberation Sans, sans-serif" fill="#d8d8d2" stroke="#3a3a36" stroke-width="1.8" stroke-linejoin="round" paint-order="stroke">Japan</text>
<text x="1144.4" y="453" text-anchor="middle" textLength="51.25" lengthAdjust="spacingAndGlyphs" font-size="12" font-family="Liberation Sans, sans-serif" fill="#d8d8d2" stroke="#3a3a36" stroke-width="1.8" stroke-linejoin="round" paint-order="stroke">Indonesia</text>
<text x="1272" y="636.2" text-anchor="middle" textLength="45.75" lengthAdjust="spacingAndGlyphs" font-size="12" font-family="Liberation Sans, sans-serif" fill="#d8d8d2" stroke="#3a3a36" stroke-width="1.8" stroke-linejoin="round" paint-order="stroke">Australia</text>
<text x="663" y="178" font-size="12" font-family="Liberation Sans, sans-serif" fill="#e8e8e0" stroke="#3a3a36" stroke-width="1.8" paint-order="stroke">Iran</text>
<text x="739.4" y="325" text-anchor="middle" textLength="51" lengthAdjust="spacingAndGlyphs" font-size="10.5" font-family="Liberation Sans, sans-serif" fill="#8ea5c6">Arabian Sea</text>
<text x="863" y="614.5" text-anchor="middle" textLength="56.8" lengthAdjust="spacingAndGlyphs" font-size="10.5" font-family="Liberation Sans, sans-serif" fill="#8ea5c6">Indian Ocean</text>
<text x="1443" y="573.8" text-anchor="middle" textLength="40" lengthAdjust="spacingAndGlyphs" font-size="10.5" font-family="Liberation Sans, sans-serif" fill="#8ea5c6">Coral Sea</text>
<text x="1464.4" y="757" text-anchor="middle" textLength="52.4" lengthAdjust="spacingAndGlyphs" font-size="10.5" font-family="Liberation Sans, sans-serif" fill="#8ea5c6">Tasman Sea</text>
<g fill="#fff" opacity=".9"><circle cx="1234.8" cy="209.7" r=".9"/><circle cx="1194.5" cy="243.5" r=".9"/><circle cx="1356.5" cy="315.5" r=".9"/><circle cx="1348.4" cy="329.7" r=".9"/><circle cx="1521.3" cy="365.5" r=".9"/><circle cx="1450" cy="379" r=".9"/><circle cx="1548.4" cy="378" r=".9"/><circle cx="1272.6" cy="376.5" r=".9"/><circle cx="959.5" cy="343.5" r=".9"/><circle cx="815.5" cy="400" r=".9"/><circle cx="680.5" cy="466" r=".9"/><circle cx="1056.6" cy="510" r=".9"/><circle cx="1056" cy="539.5" r=".9"/><circle cx="1289.5" cy="397" r=".9"/><circle cx="1559.5" cy="421" r=".9"/><circle cx="1525.5" cy="566.5" r=".9"/><circle cx="1658" cy="573.5" r=".9"/><circle cx="1649" cy="593.5" r=".9"/><circle cx="696" cy="585.5" r=".9"/><circle cx="680" cy="592" r=".9"/></g>
<g fill="#fff" opacity=".85"><circle cx="1262" cy="158" r=".9"/><circle cx="1266" cy="156.5" r=".9"/><circle cx="1270" cy="155" r=".9"/><circle cx="1274" cy="156" r=".9"/><circle cx="1279" cy="153" r=".9"/><circle cx="1284" cy="151" r=".9"/><circle cx="1290" cy="150" r=".9"/><circle cx="1296" cy="148" r=".9"/><circle cx="1300" cy="150" r=".9"/><circle cx="1305" cy="149" r=".9"/><circle cx="1310" cy="147" r=".9"/><circle cx="1315" cy="145" r=".9"/><circle cx="1318" cy="142" r=".9"/><circle cx="1258" cy="160" r=".9"/><circle cx="1253" cy="163" r=".9"/><circle cx="1249" cy="165" r=".9"/><circle cx="1246" cy="168" r=".9"/><circle cx="1287" cy="156" r=".9"/><circle cx="1294" cy="153" r=".9"/><circle cx="1312" cy="150" r=".9"/></g>
<g fill="#fff" opacity=".9"><circle cx="1044.3" cy="421.7" r=".8"/><circle cx="1046.4" cy="421.4" r=".8"/><circle cx="1044.5" cy="421.7" r=".8"/><circle cx="1043.1" cy="421.5" r=".8"/><circle cx="1045.1" cy="422.3" r=".8"/><circle cx="1042.7" cy="421.0" r=".8"/><circle cx="1042.7" cy="422.3" r=".8"/><circle cx="1045.4" cy="420.3" r=".8"/><circle cx="1046.6" cy="422.7" r=".8"/><circle cx="1115.9" cy="258.4" r=".8"/><circle cx="1112.9" cy="256.3" r=".8"/><circle cx="1115.2" cy="256.4" r=".8"/><circle cx="1113.1" cy="257.1" r=".8"/><circle cx="1112.2" cy="257.9" r=".8"/><circle cx="1114.6" cy="259.2" r=".8"/><circle cx="1115.1" cy="258.5" r=".8"/><circle cx="1115.0" cy="258.6" r=".8"/><circle cx="1114.7" cy="257.2" r=".8"/><circle cx="1118.0" cy="259.8" r=".8"/><circle cx="1319.7" cy="151.6" r=".8"/><circle cx="1317.1" cy="150.2" r=".8"/><circle cx="1316.9" cy="149.7" r=".8"/><circle cx="1319.3" cy="150.7" r=".8"/><circle cx="1319.7" cy="150.7" r=".8"/><circle cx="1320.3" cy="152.0" r=".8"/><circle cx="1287.5" cy="155.1" r=".8"/><circle cx="1292.1" cy="155.9" r=".8"/><circle cx="1292.4" cy="155.7" r=".8"/><circle cx="1287.9" cy="156.4" r=".8"/><circle cx="1291.4" cy="155.3" r=".8"/><circle cx="1167.5" cy="189.4" r=".8"/><circle cx="1172.8" cy="190.9" r=".8"/><circle cx="1167.7" cy="189.1" r=".8"/><circle cx="1167.6" cy="188.4" r=".8"/><circle cx="1013.2" cy="326.2" r=".8"/><circle cx="1012.2" cy="326.9" r=".8"/><circle cx="1010.8" cy="327.6" r=".8"/><circle cx="1010.5" cy="327.3" r=".8"/><circle cx="1141.5" cy="207.8" r=".8"/><circle cx="1141.9" cy="207.4" r=".8"/><circle cx="1144.9" cy="208.7" r=".8"/><circle cx="1132.2" cy="232.9" r=".8"/><circle cx="1131.8" cy="231.7" r=".8"/><circle cx="1134.4" cy="232.3" r=".8"/></g>
<g fill="#fff" opacity=".92"><circle cx="669.8" cy="224.4" r="0.8"/><circle cx="676" cy="226.2" r="0.9"/><circle cx="682.2" cy="225.6" r="1.1"/><circle cx="686.6" cy="221.2" r="0.9"/><circle cx="692.2" cy="222.5" r="0.8"/><circle cx="693.5" cy="231.9" r="1.1"/><circle cx="718.5" cy="235.6" r="0.9"/><circle cx="732.2" cy="236.9" r="0.9"/><circle cx="743.5" cy="235.6" r="1.1"/><circle cx="772.9" cy="245" r="0.8"/><circle cx="779.8" cy="243.8" r="0.8"/><circle cx="779.8" cy="248.8" r="0.8"/><circle cx="781" cy="252.5" r="1.1"/><circle cx="793.5" cy="253.8" r="0.9"/><circle cx="793.5" cy="272.5" r="0.8"/><circle cx="807.9" cy="267.5" r="1.1"/><circle cx="810.4" cy="266.2" r="1.1"/><circle cx="816.2" cy="305.5" r="0.9"/><circle cx="832.5" cy="345" r="0.8"/><circle cx="835.8" cy="356.2" r="0.9"/><circle cx="845.8" cy="370" r="0.8"/><circle cx="850.8" cy="366.2" r="1.1"/><circle cx="863.2" cy="351.2" r="0.9"/><circle cx="865.8" cy="341.2" r="0.9"/><circle cx="882" cy="302.5" r="0.8"/><circle cx="895" cy="290.5" r="0.9"/><circle cx="910" cy="278" r="1.1"/><circle cx="916.2" cy="273" r="0.8"/><circle cx="928.8" cy="260.5" r="0.8"/><circle cx="935" cy="259.2" r="1.1"/><circle cx="942.5" cy="260.5" r="0.8"/><circle cx="973.8" cy="298" r="1.1"/><circle cx="975" cy="309.2" r="0.9"/><circle cx="986.2" cy="305.5" r="0.9"/><circle cx="1000" cy="320.5" r="1.1"/><circle cx="1002.5" cy="330.5" r="0.8"/><circle cx="1003.8" cy="330" r="1.1"/><circle cx="1003.8" cy="330" r="0.9"/><circle cx="1002.5" cy="360" r="1.1"/><circle cx="1032.5" cy="415" r="0.8"/><circle cx="1045.5" cy="420.5" r="1.1"/><circle cx="1044" cy="412.5" r="1.1"/><circle cx="1028.8" cy="383.8" r="0.8"/><circle cx="1017.5" cy="376.2" r="0.8"/><circle cx="1010" cy="362.5" r="0.9"/><circle cx="1011.2" cy="345" r="0.9"/><circle cx="1014.5" cy="327.5" r="0.9"/><circle cx="1020" cy="330" r="0.8"/><circle cx="1025" cy="336.2" r="1.1"/><circle cx="1041.2" cy="351.2" r="0.8"/><circle cx="1081.2" cy="343.8" r="0.8"/><circle cx="1083.8" cy="337.5" r="0.9"/><circle cx="1083.8" cy="330" r="0.8"/><circle cx="1081.2" cy="318" r="1.1"/><circle cx="1070" cy="300.5" r="1.1"/><circle cx="1057.5" cy="285.5" r="0.8"/><circle cx="1060" cy="278" r="1.1"/><circle cx="1065" cy="271.8" r="1.1"/><circle cx="1070" cy="269.2" r="0.9"/><circle cx="1077.5" cy="265.5" r="1.1"/><circle cx="1085" cy="265.5" r="0.8"/><circle cx="1088" cy="270.5" r="0.8"/><circle cx="1089.5" cy="277.2" r="0.9"/><circle cx="1092" cy="273" r="0.8"/><circle cx="1107.5" cy="263" r="0.8"/><circle cx="1156.2" cy="236.8" r="0.9"/><circle cx="1160" cy="230.5" r="1.1"/><circle cx="1165" cy="223" r="0.9"/><circle cx="1177.5" cy="205.5" r="0.8"/><circle cx="1180" cy="195.5" r="0.9"/><circle cx="1160" cy="125.5" r="1.1"/><circle cx="666" cy="242.6" r="1.1"/><circle cx="672.2" cy="241.2" r="0.9"/><circle cx="686.2" cy="227.5" r="1.1"/><circle cx="703.5" cy="249.4" r="0.9"/><circle cx="713.8" cy="261.2" r="1.1"/><circle cx="689.8" cy="288.8" r="0.8"/><circle cx="878.5" cy="376.2" r="1.1"/><circle cx="870.8" cy="386.5" r="0.8"/><circle cx="865.8" cy="385.2" r="0.9"/><circle cx="1079.5" cy="284.5" r="0.8"/><circle cx="1093.8" cy="279" r="1.1"/><circle cx="1096.5" cy="283" r="0.8"/><circle cx="1203.8" cy="115.5" r="1.1"/><circle cx="1230" cy="123" r="0.9"/><circle cx="1233.8" cy="129.2" r="0.8"/><circle cx="1234.4" cy="133.0" r=".9"/><circle cx="1235.2" cy="138" r="1.1"/><circle cx="1231.2" cy="150.5" r="1.1"/><circle cx="1226.2" cy="152" r="0.8"/><circle cx="1218.1" cy="154.5" r=".9"/><circle cx="1215" cy="155.8" r="1.1"/><circle cx="1206.8" cy="152.7" r=".9"/><circle cx="1205" cy="150.5" r="1.1"/><circle cx="1203.8" cy="144.4" r=".9"/><circle cx="1200.9" cy="133.0" r=".9"/><circle cx="1200" cy="128" r="1.1"/><circle cx="1236.2" cy="168" r="0.8"/><circle cx="1238.1" cy="166.1" r=".9"/><circle cx="1240" cy="163" r="0.8"/><circle cx="1243.8" cy="162.5" r=".9"/><circle cx="1246.2" cy="161.5" r="1.1"/><circle cx="1247.8" cy="164.2" r=".9"/><circle cx="1252.3" cy="166.2" r=".9"/><circle cx="1253.4" cy="168" r="0.9"/><circle cx="1252" cy="173" r="1.1"/><circle cx="1250.4" cy="175.3" r=".9"/><circle cx="1250" cy="178" r="0.8"/><circle cx="1247.8" cy="183" r="1.1"/><circle cx="1245.2" cy="183.8" r=".9"/><circle cx="1242.5" cy="183.8" r="0.8"/><circle cx="1242.0" cy="181.5" r=".9"/><circle cx="1240.5" cy="179.2" r="1.1"/><circle cx="1240.9" cy="176.8" r=".9"/><circle cx="1241.2" cy="174.2" r="0.8"/><circle cx="1238.8" cy="172.5" r=".9"/><circle cx="1237.5" cy="171.8" r="1.1"/><circle cx="1236.1" cy="170.6" r=".9"/><circle cx="1246.2" cy="161.1" r="0.9"/><circle cx="1246.7" cy="158.8" r=".9"/><circle cx="1247.5" cy="156.8" r="0.9"/><circle cx="1253.8" cy="153" r="0.9"/><circle cx="1258.8" cy="148.6" r="0.8"/><circle cx="1263.8" cy="146.6" r="1.1"/><circle cx="1270" cy="147.4" r="0.8"/><circle cx="1277.5" cy="146.8" r="0.8"/><circle cx="1283.8" cy="144.9" r="0.9"/><circle cx="1285.6" cy="142.7" r=".9"/><circle cx="1286.2" cy="139.9" r="0.9"/><circle cx="1287.6" cy="136.5" r=".9"/><circle cx="1290" cy="134.2" r="0.8"/><circle cx="1292.3" cy="132.8" r=".9"/><circle cx="1296.2" cy="131.8" r="0.8"/><circle cx="1299.0" cy="131.2" r=".9"/><circle cx="1302.5" cy="129.2" r="0.9"/><circle cx="1304.5" cy="126.8" r=".9"/><circle cx="1308.9" cy="122.0" r=".9"/><circle cx="1311.7" cy="115.7" r=".9"/><circle cx="1325.2" cy="115.0" r=".9"/><circle cx="1323.1" cy="119.2" r="0.9"/><circle cx="1321.9" cy="122.1" r=".9"/><circle cx="1321.5" cy="125.5" r="1.1"/><circle cx="1321.3" cy="130.0" r=".9"/><circle cx="1320.8" cy="133" r="0.8"/><circle cx="1319" cy="140.5" r="0.8"/><circle cx="1316.5" cy="146.8" r="1.1"/><circle cx="1313.8" cy="149.1" r=".9"/><circle cx="1312.5" cy="150" r="1.1"/><circle cx="1309.7" cy="150.3" r=".9"/><circle cx="1307.5" cy="150.6" r="0.9"/><circle cx="1305.3" cy="152.2" r=".9"/><circle cx="1302.5" cy="153.1" r="1.1"/><circle cx="1299.3" cy="152.6" r=".9"/><circle cx="1297.5" cy="153.1" r="0.9"/><circle cx="1288.7" cy="155.0" r=".9"/><circle cx="1287.5" cy="156.8" r="0.8"/><circle cx="1281.3" cy="163.2" r=".9"/><circle cx="1280" cy="161.9" r="0.8"/><circle cx="1277.7" cy="159.3" r=".9"/><circle cx="1275" cy="156.9" r="1.1"/><circle cx="1270.7" cy="156.3" r=".9"/><circle cx="1267.5" cy="156.2" r="1.1"/><circle cx="1263.4" cy="157.8" r=".9"/><circle cx="1260" cy="159.2" r="1.1"/><circle cx="1257.1" cy="159.6" r=".9"/><circle cx="1253.1" cy="161.2" r="0.9"/><circle cx="1249.0" cy="161.8" r=".9"/><circle cx="1257.5" cy="163" r="0.9"/><circle cx="1259.6" cy="161.6" r=".9"/><circle cx="1262.5" cy="159.9" r="0.8"/><circle cx="1265.9" cy="159.9" r=".9"/><circle cx="1268.8" cy="159.1" r="1.1"/><circle cx="1271.5" cy="160.4" r=".9"/><circle cx="1272.8" cy="160.5" r="0.9"/><circle cx="1269.8" cy="162.3" r=".9"/><circle cx="1267.5" cy="165.6" r="0.9"/><circle cx="1263.7" cy="166.2" r=".9"/><circle cx="1261.2" cy="168.1" r="1.1"/><circle cx="1260.4" cy="167.4" r=".9"/><circle cx="1258" cy="166.8" r="0.9"/><circle cx="1258.1" cy="165.4" r=".9"/><circle cx="1247.5" cy="438.8" r="1.1"/><circle cx="1272.5" cy="451.2" r="0.8"/><circle cx="1278.8" cy="456.2" r="1.1"/><circle cx="1300" cy="443.8" r="1.1"/><circle cx="1320" cy="451.2" r="1.1"/><circle cx="1330" cy="455" r="0.8"/><circle cx="1347.5" cy="463.8" r="1.1"/><circle cx="1355" cy="470" r="1.1"/><circle cx="1368.8" cy="491.2" r="0.9"/><circle cx="1375" cy="497.5" r="1.1"/><circle cx="1375" cy="505" r="0.8"/><circle cx="1367.5" cy="501.2" r="1.1"/><circle cx="1357.5" cy="492.5" r="0.8"/><circle cx="1348.8" cy="492.5" r="0.9"/><circle cx="1298.8" cy="493.8" r="0.9"/><circle cx="1300" cy="488.8" r="1.1"/><circle cx="1307.5" cy="480" r="0.9"/><circle cx="1297.5" cy="470" r="1.1"/><circle cx="1290" cy="467.5" r="0.9"/><circle cx="1275" cy="461.2" r="0.9"/><circle cx="1262.5" cy="450" r="0.9"/><circle cx="1252.5" cy="443.8" r="0.8"/><circle cx="1377.5" cy="473.8" r="0.8"/><circle cx="1397.5" cy="476.2" r="1.1"/><circle cx="1387.5" cy="478.8" r="1.1"/><circle cx="1380" cy="477.5" r="0.8"/><circle cx="1423" cy="472" r="0.8"/><circle cx="1431.8" cy="480" r="1.1"/><circle cx="1425" cy="477.5" r="1.1"/><circle cx="1461.2" cy="499.5" r="0.9"/><circle cx="1468" cy="503" r="0.9"/><circle cx="1461.2" cy="502" r="0.8"/><circle cx="1225" cy="415.5" r="1.1"/><circle cx="1228" cy="422.5" r="0.8"/><circle cx="1225.8" cy="458.2" r="1.1"/><circle cx="1209.5" cy="456.2" r="1.1"/><circle cx="1215" cy="454.8" r="0.8"/><circle cx="1218" cy="458" r="0.9"/><circle cx="1270" cy="475" r="0.8"/><circle cx="1270" cy="482.8" r="0.8"/><circle cx="1197.5" cy="501" r="0.8"/><circle cx="1217" cy="494.8" r="0.9"/><circle cx="1200" cy="505.2" r="0.8"/><circle cx="1192" cy="509.2" r="0.9"/><circle cx="1157" cy="502.5" r="0.8"/><circle cx="1107.5" cy="483.5" r="0.9"/><circle cx="1155.5" cy="497.5" r="0.9"/><circle cx="1125" cy="497.8" r="0.8"/><circle cx="1115" cy="495.2" r="0.8"/><circle cx="1162.5" cy="494.2" r="1.1"/><circle cx="1163.8" cy="497.5" r="0.8"/><circle cx="1206.2" cy="360.8" r="0.9"/><circle cx="1211.5" cy="372.5" r="0.8"/><circle cx="1205" cy="383.8" r="1.1"/><circle cx="1202.5" cy="387.5" r="1.1"/><circle cx="1195" cy="376.2" r="1.1"/><circle cx="1190" cy="373.8" r="1.1"/><circle cx="1180" cy="380" r="0.8"/><circle cx="986.2" cy="391.2" r="0.9"/><circle cx="998.8" cy="396.7" r=".9"/><circle cx="1002.5" cy="401.2" r="1.1"/><circle cx="1005.6" cy="404.2" r=".9"/><circle cx="1017.5" cy="412.5" r="0.9"/><circle cx="1028.1" cy="420.0" r=".9"/><circle cx="1040" cy="430" r="0.9"/><circle cx="1043.8" cy="437.5" r="1.1"/><circle cx="1050.4" cy="448.1" r=".9"/><circle cx="1058.3" cy="459.9" r=".9"/><circle cx="1059" cy="465" r="0.8"/><circle cx="1053.5" cy="474.9" r=".9"/><circle cx="1050" cy="473.8" r="0.8"/><circle cx="1045.7" cy="471.5" r=".9"/><circle cx="1042.5" cy="468.8" r="0.8"/><circle cx="1039.3" cy="465.8" r=".9"/><circle cx="1035" cy="462.5" r="0.8"/><circle cx="1027.5" cy="455" r="0.9"/><circle cx="1024.4" cy="449.4" r=".9"/><circle cx="1020" cy="445" r="1.1"/><circle cx="1013.8" cy="435" r="0.9"/><circle cx="1007.5" cy="425" r="1.1"/><circle cx="1005.0" cy="420.2" r=".9"/><circle cx="1002.5" cy="416.2" r="0.9"/><circle cx="991.8" cy="404.5" r=".9"/><circle cx="1156.8" cy="391.2" r="0.8"/><circle cx="1146.2" cy="406.2" r="0.8"/><circle cx="1148.8" cy="416.2" r="0.9"/><circle cx="1143.8" cy="437.5" r="0.9"/><circle cx="1140" cy="443.8" r="0.8"/><circle cx="1127.5" cy="461.2" r="1.1"/><circle cx="1102.5" cy="455" r="1.1"/><circle cx="1083.8" cy="432.5" r="0.8"/><circle cx="1081.2" cy="425" r="0.9"/><circle cx="1082.5" cy="418.8" r="1.1"/><circle cx="1091.2" cy="420" r="0.8"/><circle cx="1098.8" cy="416.2" r="1.1"/><circle cx="1118.8" cy="398.8" r="1.1"/><circle cx="1126.2" cy="392.5" r="1.1"/><circle cx="1065" cy="476.2" r="0.9"/><circle cx="1079.5" cy="480.7" r=".9"/><circle cx="1089.7" cy="481.9" r=".9"/><circle cx="1121.9" cy="496.2" r=".9"/><circle cx="1102.2" cy="493.5" r=".9"/><circle cx="1097.5" cy="492.8" r="0.9"/><circle cx="1133.8" cy="496.2" r="0.8"/><circle cx="1140" cy="494.8" r="0.8"/><circle cx="1147.5" cy="493.5" r="1.1"/><circle cx="1141.2" cy="499" r="1.1"/><circle cx="1135" cy="498" r="0.9"/><circle cx="1053.8" cy="445" r="0.9"/><circle cx="1061.2" cy="454" r="0.9"/><circle cx="1071.2" cy="451.5" r="0.9"/><circle cx="1075.2" cy="451.5" r="0.9"/><circle cx="1075.2" cy="454.5" r="0.9"/><circle cx="1071.8" cy="454.5" r="0.9"/><circle cx="1150" cy="361.2" r="1.1"/><circle cx="1160" cy="351.2" r="0.9"/><circle cx="1156.9" cy="357.8" r="1.1"/><circle cx="1162.5" cy="428.8" r="1.1"/><circle cx="1168.8" cy="423.8" r="0.8"/><circle cx="1187.5" cy="427.5" r="0.9"/><circle cx="1204.2" cy="419.8" r="0.9"/><circle cx="1197.5" cy="426.2" r="1.1"/><circle cx="1166.2" cy="430.2" r="0.8"/><circle cx="1164" cy="437.5" r="0.9"/><circle cx="1168.8" cy="442.5" r="1.1"/><circle cx="1177.5" cy="438.8" r="0.8"/><circle cx="1178.8" cy="442.8" r="0.9"/><circle cx="1172.5" cy="446.5" r="1.1"/><circle cx="1181.2" cy="457.5" r="1.1"/><circle cx="1186.5" cy="466.2" r="0.9"/><circle cx="1182.5" cy="472.8" r="0.8"/><circle cx="1180" cy="465.2" r="1.1"/><circle cx="1167.5" cy="450.2" r="1.1"/><circle cx="1166.5" cy="457.5" r="0.8"/><circle cx="1166.5" cy="467.5" r="1.1"/><circle cx="1164" cy="474" r="0.9"/><circle cx="1161.2" cy="452.5" r="0.8"/><circle cx="1158.8" cy="442.5" r="0.9"/><circle cx="1168.1" cy="291.9" r="0.8"/><circle cx="1179.4" cy="292.5" r="1.1"/><circle cx="1181.1" cy="296.3" r=".9"/><circle cx="1175" cy="326.2" r="0.9"/><circle cx="1174.0" cy="326.3" r=".9"/><circle cx="1171.9" cy="327.5" r="0.9"/><circle cx="1166.4" cy="321.9" r=".9"/><circle cx="1163.1" cy="313.8" r="0.9"/><circle cx="1163.4" cy="307.6" r=".9"/><circle cx="1165.4" cy="303.3" r=".9"/><circle cx="1167.7" cy="299.2" r=".9"/><circle cx="1167.5" cy="296.2" r="0.9"/><circle cx="1175" cy="325" r="1.1"/><circle cx="1183.8" cy="324.4" r="0.9"/><circle cx="1195.2" cy="333.1" r="0.9"/><circle cx="1190" cy="332.5" r="0.9"/><circle cx="1168.8" cy="333.1" r="0.8"/><circle cx="1202.5" cy="337.5" r="0.9"/><circle cx="1205.2" cy="342.5" r="0.8"/><circle cx="1204.5" cy="346.5" r="0.9"/><circle cx="1199.8" cy="346" r="0.8"/><circle cx="1203.2" cy="347.5" r="1.1"/><circle cx="1183.8" cy="351.5" r="0.9"/><circle cx="1186.2" cy="351.2" r="0.9"/><circle cx="1190.8" cy="355" r="0.9"/><circle cx="1188.2" cy="362" r="1.1"/><circle cx="1191.9" cy="351.2" r="1.1"/><circle cx="1195.8" cy="356.2" r="0.9"/><circle cx="1192.8" cy="357.8" r="0.9"/><circle cx="1196.2" cy="356.5" r="0.9"/><circle cx="1197" cy="359" r="0.8"/><circle cx="1495" cy="587" r="0.9"/><circle cx="1592" cy="563" r="0.8"/><circle cx="1598" cy="562" r="0.8"/><circle cx="1603" cy="556" r="0.8"/><circle cx="1604" cy="559" r="0.9"/><circle cx="1517" cy="554" r="0.9"/><circle cx="1341.2" cy="538.8" r="0.9"/><circle cx="1355" cy="557.5" r="1.1"/><circle cx="1362.5" cy="576.2" r="0.9"/><circle cx="1371.2" cy="582.5" r="0.9"/><circle cx="1382.5" cy="593.8" r="1.1"/><circle cx="1391.2" cy="610" r="0.9"/><circle cx="1406.2" cy="630" r="0.8"/><circle cx="1406.2" cy="685" r="1.1"/><circle cx="1397.5" cy="702.5" r="0.9"/><circle cx="1393.8" cy="712.5" r="1.1"/><circle cx="1390" cy="722.5" r="0.8"/><circle cx="1391.2" cy="720" r="1.1"/><circle cx="1387.5" cy="731.2" r="1.1"/><circle cx="1377.5" cy="738.8" r="0.8"/><circle cx="1360" cy="746.2" r="0.8"/><circle cx="1342.5" cy="744.5" r="1.1"/><circle cx="1335" cy="745.5" r="0.9"/><circle cx="1326.2" cy="743" r="0.9"/><circle cx="1321.2" cy="740" r="0.9"/><circle cx="1311.2" cy="726.2" r="1.1"/><circle cx="1306.2" cy="717.5" r="0.8"/><circle cx="1298.8" cy="711.2" r="0.8"/><circle cx="1297.5" cy="702.5" r="1.1"/><circle cx="1296.2" cy="695" r="0.8"/><circle cx="1272.5" cy="693.8" r="1.1"/><circle cx="1267.5" cy="687.5" r="0.8"/><circle cx="1245" cy="681.2" r="0.8"/><circle cx="1215" cy="687.5" r="0.9"/><circle cx="1160" cy="706.2" r="0.9"/><circle cx="1147.5" cy="712" r="0.8"/><circle cx="1135" cy="710" r="0.9"/><circle cx="1131.2" cy="696.2" r="1.1"/><circle cx="1125" cy="662.5" r="0.9"/><circle cx="1120" cy="642.5" r="1.1"/><circle cx="1116.2" cy="627.5" r="0.8"/><circle cx="1118.8" cy="602.5" r="0.9"/><circle cx="1125" cy="598.8" r="0.8"/><circle cx="1153.8" cy="586.2" r="0.9"/><circle cx="1165" cy="582.5" r="0.8"/><circle cx="1181.2" cy="568.8" r="0.9"/><circle cx="1185" cy="560" r="0.8"/><circle cx="1191.2" cy="558.8" r="0.8"/><circle cx="1193.8" cy="553.8" r="0.9"/><circle cx="1207.5" cy="542.5" r="0.8"/><circle cx="1230" cy="545" r="1.1"/><circle cx="1280" cy="523.8" r="0.9"/><circle cx="1288.8" cy="523.8" r="0.8"/><circle cx="1285" cy="532.5" r="1.1"/><circle cx="1280" cy="537.5" r="0.9"/><circle cx="1302.5" cy="558.8" r="1.1"/><circle cx="1322.5" cy="560" r="0.9"/><circle cx="1325" cy="550" r="1.1"/><circle cx="1350" cy="767.5" r="1.1"/><circle cx="1355" cy="768" r="1.1"/><circle cx="1368.8" cy="790" r="0.9"/><circle cx="1355" cy="782.5" r="1.1"/><circle cx="1297.5" cy="716.8" r="0.9"/><circle cx="1298" cy="719" r="1.1"/><circle cx="1240.5" cy="518" r="1.1"/><circle cx="1251.2" cy="518" r="1.1"/><circle cx="1248.8" cy="520.5" r="0.9"/><circle cx="1560.8" cy="709.2" r="1.1"/><circle cx="1588.3" cy="738.3" r="0.9"/><circle cx="1599.2" cy="735.8" r="1.1"/><circle cx="1601" cy="740" r="0.8"/><circle cx="1583.3" cy="770" r="0.9"/><circle cx="1579.2" cy="773.7" r="1.1"/><circle cx="1576.7" cy="763.3" r="1.1"/><circle cx="1570.8" cy="755.8" r="1.1"/><circle cx="1573.3" cy="743.3" r="0.9"/><circle cx="1566.7" cy="720" r="0.9"/><circle cx="1570.4" cy="772.5" r="0.8"/><circle cx="1566.7" cy="783.4" r="1.1"/><circle cx="1558.9" cy="795.9" r="0.9"/><circle cx="1543.3" cy="814.6" r="0.8"/><circle cx="1524.6" cy="832.1" r="1.1"/><circle cx="1519.9" cy="829" r="0.9"/><circle cx="1518.3" cy="809.9" r="0.8"/></g>
<!--/LAND-->
</svg>
</div>

<div class="abs" style="left:662px;top:113px;width:1021px;height:4px;background:linear-gradient(rgba(0,10,20,.45),rgba(0,10,20,0));border-radius:0 6px 0 0"></div>
<!-- info panel -->
<div id="info" class="abs">
<div class="d" style="left:112px"></div><div class="d" style="left:235px"></div><div class="d" style="left:322px"></div><div class="d" style="left:411px"></div>
<div class="h" style="left:13.8px"><b>ETD</b> UTC(+00:00)</div><div class="v" style="left:13.8px"><b>07.10.</b><i>06:00</i></div>
<div class="h" style="left:137.8px"><b>ETA</b> UTC(+10:00)</div><div class="v" style="left:137.8px"><b>21.10.</b><i>18:46</i></div>
<div class="h" style="left:260.8px"><b>Speed</b></div><div class="v" style="left:260.8px"><b>12</b><i>kts</i></div>
<div class="h" style="left:347.8px"><b>Duration</b></div><div class="v" style="left:347.8px"><b>14.1</b><i>d</i></div>
<div class="h" style="left:436.8px"><b>Distance</b></div><div class="v" style="left:436.8px"><b>4,065.36</b><i>NM</i></div>
</div>

<!-- map buttons -->
<div class="abs mb" style="left:1603px;top:123px;width:32px;height:32px"></div>
<svg class="abs" style="left:1613px;top:131px" width="12" height="16" viewBox="0 0 12 16"><path d="M6 1 C3.2 1 1.6 3 1.6 5.2 C1.6 8.2 6 13.6 6 13.6 C6 13.6 10.4 8.2 10.4 5.2 C10.4 3 8.8 1 6 1 Z" fill="#fff"/><circle cx="6" cy="5.2" r="1.6" fill="#15467f"/></svg>
<div class="abs mb" style="left:1642px;top:123px;width:32px;height:32px"></div>
<svg class="abs" style="left:1649.7px;top:130px" width="16" height="16" viewBox="0 0 16 16"><path d="M8 1.5 L14.5 6.5 L8 11.5 L1.5 6.5 Z" fill="#fff"/><path d="M2.6 9.3 L8 13.4 L13.4 9.3 L14.5 10.2 L8 15.2 L1.5 10.2 Z" fill="#fff"/></svg>

<div class="abs mb mb2" style="left:1653px;top:786px;width:21px;height:21px"></div>
<div class="abs mb mb2" style="left:1653px;top:810px;width:21px;height:21px"></div>
<div class="abs mb mb2" style="left:1653px;top:834px;width:21px;height:21px"></div>
<div class="abs mb mb2" style="left:1653px;top:858px;width:21px;height:21px"></div>
<svg class="abs" style="left:1653px;top:786px" width="21" height="93" viewBox="0 0 21 93">
<polygon points="14.50,10.40 14.71,10.94 15.19,11.63 15.54,12.45 15.45,13.20 14.85,13.66 13.96,13.76 13.13,13.69 12.55,13.78 12.19,14.23 11.83,14.99 11.30,15.71 10.60,16.00 9.90,15.71 9.37,14.99 9.01,14.23 8.65,13.78 8.07,13.69 7.24,13.76 6.35,13.66 5.75,13.20 5.66,12.45 6.01,11.63 6.49,10.94 6.70,10.40 6.49,9.86 6.01,9.17 5.66,8.35 5.75,7.60 6.35,7.14 7.24,7.04 8.07,7.11 8.65,7.02 9.01,6.57 9.37,5.81 9.90,5.09 10.60,4.80 11.30,5.09 11.83,5.81 12.19,6.57 12.55,7.02 13.13,7.11 13.96,7.04 14.85,7.14 15.45,7.60 15.54,8.35 15.19,9.17 14.71,9.86" fill="none" stroke="#fff" stroke-width="1.05" stroke-linejoin="round"/><circle cx="10.6" cy="10.4" r="2" fill="none" stroke="#dfe9ff" stroke-width=".9"/>
<g stroke="#fff" stroke-width="1.5" fill="#fff"><path d="M3 27 L8 32 M18 27 L13 32 M3 42 L8 37 M18 42 L13 37" fill="none"/><path d="M2.5 26.5 h4.2 l-4.2 4.2z M18.5 26.5 h-4.2 l4.2 4.2z M2.5 42.5 h4.2 l-4.2 -4.2z M18.5 42.5 h-4.2 l4.2 -4.2z" stroke="none"/></g>
<path d="M6 58.5 H15 M10.5 54 V63" stroke="#fff" stroke-width="1.3"/>
<path d="M6 82.5 H15" stroke="#fff" stroke-width="1.3"/>
</svg>

<!-- attribution -->
<div class="abs" style="left:1425px;top:888px;width:258px;height:16px;background:rgba(255,255,255,.5);border-radius:0 0 6px 0"></div>
<div class="abs t" style="left:1428px;top:889px;font-size:10px;color:#2b3644;letter-spacing:-.09px">&#169; Mapbox &#169; OpenStreetMap <b>Improve this map</b> &#169; Maxar</div>

<!-- mapbox logo -->
<svg class="abs" style="left:667px;top:882px" width="70" height="16" viewBox="0 0 70 16"><circle cx="8.1" cy="8" r="7.1" fill="#eaf3f3"/><path d="M8.9 3.6 C11.6 3.6 13 5.7 13 7.7 C13 10.4 10.9 12 8.6 12 C6.6 12 4.6 11.2 3.2 9.9 C4.4 9.4 4.7 8.6 4.8 7.5 C5 5.1 6.7 3.6 8.9 3.6 Z" fill="#062240"/><path d="M9.3 5.3 L10 6.9 L11.6 7.6 L10 8.3 L9.3 9.9 L8.6 8.3 L7 7.6 L8.6 6.9 Z" fill="#eaf3f3"/><text x="18.7" y="11.8" font-size="11.4" font-weight="bold" fill="#eaf2f6" font-family="Liberation Sans, sans-serif" textLength="48.4" lengthAdjust="spacing">mapbox</text></svg>
</body>
</html>
